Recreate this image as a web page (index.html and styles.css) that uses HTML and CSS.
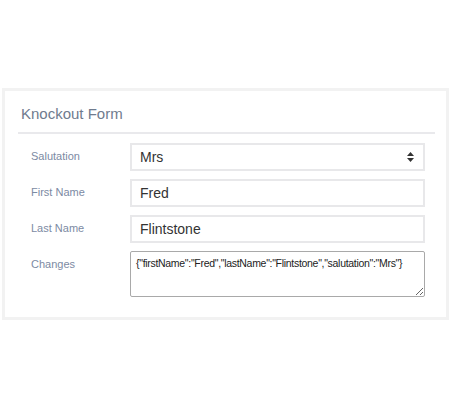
FILE: index.html
```html
<!DOCTYPE html>
<html>
<head>
    <title>Knockout Form</title>
    <link rel="stylesheet" href="styles.css">
</head>
<body>
    <div class="panel">
        <h3 class="title">Knockout Form</h3>
        <form class="form">
            <div class="row">
                <label>Salutation</label>
                <div class="select">
                    <span>Mrs</span>
                    <svg width="7" height="10" viewBox="0 0 7 10"><path d="M3.5 0L7 4H0z M0 6h7L3.5 10z" fill="#333"/></svg>
                </div>
            </div>
            <div class="row">
                <label>First Name</label>
                <input type="text" value="Fred">
            </div>
            <div class="row">
                <label>Last Name</label>
                <input type="text" value="Flintstone">
            </div>
            <div class="row">
                <label>Changes</label>
                <textarea>{"firstName":"Fred","lastName":"Flintstone","salutation":"Mrs"}</textarea>
            </div>
        </form>
    </div>
</body>
</html>
```

FILE: styles.css
```css
body { margin: 0; background: #fff; font-family: "Liberation Sans", Arial, sans-serif; }
.panel { margin: 88px 3px 0 2px; border: 3px solid #f2f2f2; height: 232px; box-sizing: border-box; }
.title { margin: 0 11px 0 13px; padding: 14px 3px 9px; font-size: 15px; font-weight: normal; color: #6f7b8e; border-bottom: 2px solid #e9e9ec; line-height: 18px; }
.form { padding: 9px 21px 0 26px; }
.row { display: flex; align-items: flex-start; margin-bottom: 8px; }
.row label { width: 99px; font-size: 11px; color: #7c8aa3; padding-top: 7px; }
.row input, .select { flex: 1; height: 28px; box-sizing: border-box; border: 2px solid #e8e8ea; padding: 0 8px; font-family: inherit; font-size: 14px; color: #333; outline: none; }
.select { display: flex; align-items: center; justify-content: space-between; padding-right: 9px; }
textarea { flex: 1; height: 46px; box-sizing: border-box; border: 1px solid #a9a9a9; border-radius: 2px; padding: 5px 5px; font-family: inherit; font-size: 10.5px; letter-spacing: -0.3px; color: #222; resize: both; }
```
